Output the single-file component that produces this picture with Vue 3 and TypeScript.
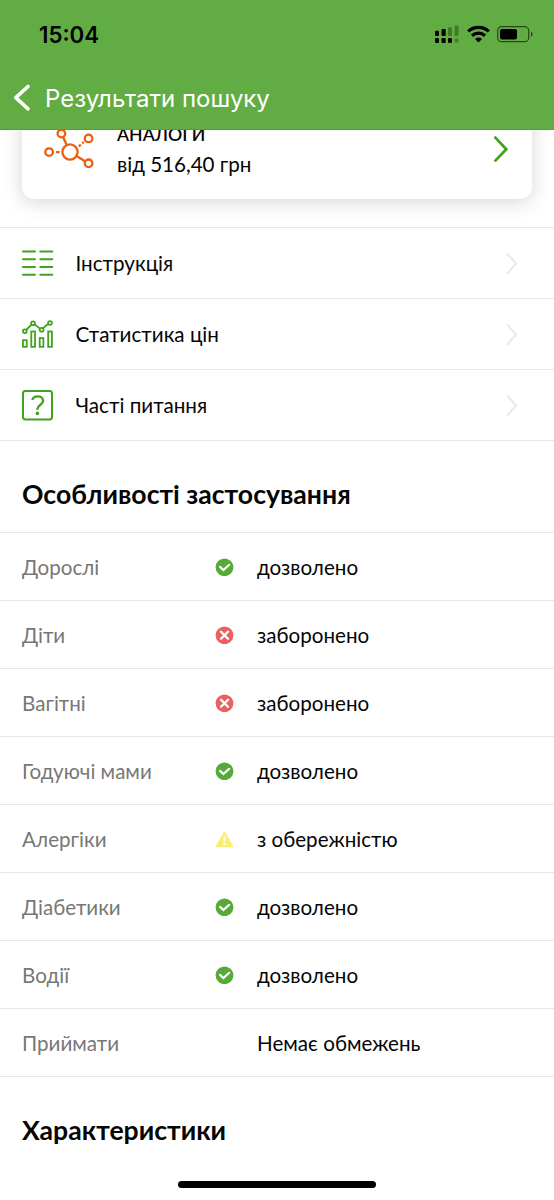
<script setup lang="ts">
type Status = 'ok' | 'no' | 'warn' | 'none'

interface MenuItem {
  icon: 'list' | 'chart' | 'question'
  label: string
}

interface UsageRow {
  label: string
  status: Status
  value: string
}

const menu: MenuItem[] = [
  { icon: 'list', label: 'Інструкція' },
  { icon: 'chart', label: 'Статистика цін' },
  { icon: 'question', label: 'Часті питання' },
]

const usage: UsageRow[] = [
  { label: 'Дорослі', status: 'ok', value: 'дозволено' },
  { label: 'Діти', status: 'no', value: 'заборонено' },
  { label: 'Вагітні', status: 'no', value: 'заборонено' },
  { label: 'Годуючі мами', status: 'ok', value: 'дозволено' },
  { label: 'Алергіки', status: 'warn', value: 'з обережністю' },
  { label: 'Діабетики', status: 'ok', value: 'дозволено' },
  { label: 'Водії', status: 'ok', value: 'дозволено' },
  { label: 'Приймати', status: 'none', value: 'Немає обмежень' },
]
</script>

<template>
  <div class="screen">
    <header class="header">
      <div class="status-bar">
        <span class="time">15:04</span>
        <svg class="indicators" width="100" height="20" viewBox="0 0 100 20">
          <g>
            <rect x="1" y="6.7" width="4" height="5.3" rx="1" />
            <rect x="7.5" y="5" width="4.2" height="7" rx="1" />
            <rect x="14" y="3.2" width="4" height="8.8" rx="1" opacity="0.3" />
            <rect x="20.6" y="1.5" width="4" height="10.5" rx="1" opacity="0.3" />
            <rect x="1" y="14" width="4" height="5" rx="1.3" />
            <rect x="7.5" y="14" width="4.2" height="5" rx="1.3" />
            <rect x="14" y="14" width="4" height="5" rx="1.3" />
            <rect x="20.8" y="14.5" width="3.6" height="4" rx="1" opacity="0.3" />
          </g>
          <g fill="none" stroke="#000" stroke-width="3.3">
            <path d="M34.2 7.4a15.2 15.2 0 0 1 20.6 0" />
            <path d="M38 11.7a9.6 9.6 0 0 1 13 0" />
          </g>
          <path d="M41 14.9a5.4 5.4 0 0 1 7 0l-3.5 3.5z" />
          <rect x="63.7" y="2.7" width="31" height="15" rx="4" fill="none" stroke="#000" stroke-opacity="0.6" stroke-width="1.2" />
          <rect x="66" y="5" width="17" height="10.5" rx="2" />
          <path d="M97 7.8c2 .8 2 4.2 0 5z" opacity="0.6" />
        </svg>
      </div>
      <div class="nav">
        <svg class="back" width="18" height="28" viewBox="0 0 18 28">
          <path d="M16 2.5L3.8 13.7 16 24.8" fill="none" stroke="#fff" stroke-width="3.6" stroke-linecap="round" stroke-linejoin="round" />
        </svg>
        <span class="nav-title">Результати пошуку</span>
      </div>
    </header>

    <main class="content">
      <section class="card">
        <svg class="molecule" width="52" height="44" viewBox="0 0 52 44">
          <g fill="none" stroke="#eb5f10" stroke-width="2.3">
            <circle cx="27" cy="23" r="7.6" />
            <circle cx="18.4" cy="4.6" r="3.8" />
            <circle cx="45.6" cy="9.4" r="3.8" />
            <circle cx="6.1" cy="23.1" r="3.8" />
            <circle cx="45.6" cy="34.3" r="3.8" />
            <path d="M20.2 8.3l3.5 7.7M34 27.2l8 5M13 23.1h3.6M35.8 17.4l2-1.7M39.2 14.4l1.6-1.2" />
          </g>
        </svg>
        <div class="card-text">
          <span class="card-title">АНАЛОГИ</span>
          <span class="card-price">від 516,40 грн</span>
        </div>
        <svg class="card-arrow" width="18" height="30" viewBox="0 0 18 30">
          <path d="M2.4 3.6l10.9 11.6L2.4 26.6" fill="none" stroke="#43a31d" stroke-width="2.8" stroke-linecap="round" />
        </svg>
      </section>

      <nav class="menu">
        <a v-for="item in menu" :key="item.label" class="menu-item">
          <svg class="menu-icon" width="32" height="32" viewBox="0 0 32 32" fill="none" stroke="#3fa41c">
            <path v-if="item.icon === 'list'" stroke-width="2" stroke-linecap="round" d="M1 4.6h12M18.3 4.6h12M1 12.3h12M18.3 12.3h12M1 20h12M18.3 20h12M1 27.7h12M18.3 27.7h12" />
            <g v-else-if="item.icon === 'chart'" stroke-width="1.8">
              <path d="M4.1 12l5.4-5.3M12.6 6.4l5.4 4.2M20.8 10.4l5.5-4.6" />
              <circle cx="2.8" cy="13.3" r="1.9" />
              <circle cx="11" cy="5.2" r="1.9" />
              <circle cx="19.6" cy="11.8" r="1.9" />
              <circle cx="28" cy="5" r="1.9" />
              <rect x="1" y="22.2" width="3.7" height="6.6" />
              <rect x="9.3" y="13.5" width="3.7" height="15.3" />
              <rect x="17.7" y="20.1" width="3.7" height="8.7" />
              <rect x="26.2" y="13.5" width="3.7" height="15.3" />
            </g>
            <g v-else>
              <rect x="1" y="1.9" width="29" height="28.6" rx="2.4" stroke-width="2" />
              <path d="M10.3 11c.6-2.4 2.5-3.6 5.3-3.6 3.2 0 5.5 1.7 5.5 4.4 0 4.1-5.7 4.2-5.7 8.2v.8" stroke-width="2.4" />
              <circle cx="15.4" cy="24.4" r="1.8" fill="#3fa41c" stroke="none" />
            </g>
          </svg>
          <span class="menu-label">{{ item.label }}</span>
          <svg class="menu-arrow" width="14" height="24" viewBox="0 0 14 24">
            <path d="M3 2.4l9 10.2L3 22.8" fill="none" stroke="#e9e9e9" stroke-width="2" />
          </svg>
        </a>
      </nav>

      <h2 class="section-title">Особливості застосування</h2>

      <div class="usage">
        <div v-for="row in usage" :key="row.label" class="usage-row">
          <span class="usage-label">{{ row.label }}</span>
          <span class="usage-icon">
            <svg v-if="row.status !== 'none'" width="19" height="18" viewBox="0 0 19 18">
              <g v-if="row.status === 'ok'">
                <circle cx="9.5" cy="9.3" r="8.9" fill="#55ab36" />
                <path d="M5.1 8.9l3.3 3.1 5.8-5.2" fill="none" stroke="#fff" stroke-width="2.2" stroke-linecap="round" />
              </g>
              <g v-else-if="row.status === 'no'">
                <circle cx="9.5" cy="9.3" r="8.9" fill="#ee6060" />
                <path d="M6 5.8l7 7M13 5.8l-7 7" stroke="#fff" stroke-width="2.3" stroke-linecap="round" />
              </g>
              <g v-else>
                <path d="M9.5 2l8.2 14.6H1.3z" fill="#fbee78" stroke="#fbee78" stroke-width="1.4" stroke-linejoin="round" />
                <path d="M9.5 6.4v5M9.5 13.1v2" stroke="#fff" stroke-width="1.9" />
              </g>
            </svg>
          </span>
          <span class="usage-value">{{ row.value }}</span>
        </div>
      </div>

      <h2 class="section-title">Характеристики</h2>
    </main>

    <div class="home-indicator"></div>
  </div>
</template>

<style>
body {
  margin: 0;
  background: #fff;
}
</style>

<style scoped>
.screen {
  position: relative;
  width: 554px;
  height: 1200px;
  overflow: hidden;
  display: flex;
  flex-direction: column;
  background: #fff;
  color: #050505;
  font-family: Lato, 'Noto Sans', sans-serif;
}

.header {
  box-sizing: border-box;
  flex: none;
  height: 130px;
  background: #62ad43;
  border-bottom: 1px solid #559b38;
  font-family: Inter, sans-serif;
}

.status-bar {
  display: flex;
  justify-content: space-between;
  align-items: center;
  height: 68px;
  padding: 0 20px 0 39px;
}

.time {
  font-size: 22.3px;
  font-weight: 600;
  color: #000;
}

.nav {
  display: flex;
  align-items: center;
  height: 60px;
  padding-left: 12px;
}

.nav-title {
  margin-left: 15px;
  font-size: 24px;
  color: #fff;
  white-space: nowrap;
}

.content {
  flex: 1;
  min-height: 0;
  overflow: hidden;
}

.card {
  box-sizing: border-box;
  display: flex;
  align-items: flex-start;
  height: 111px;
  margin: -42px 22px 28px;
  padding: 41px 21px 0;
  border-radius: 12px;
  background: #fff;
  box-shadow: 0 3px 20px rgba(0, 0, 0, 0.17);
}

.molecule {
  flex: none;
}

.card-text {
  display: flex;
  flex-direction: column;
  flex: 1;
  margin-left: 22px;
}

.card-title {
  margin-top: -7px;
  font-size: 17.7px;
  font-weight: 600;
  line-height: 26px;
}

.card-price {
  margin-top: 2px;
  font-size: 20.6px;
  line-height: 28px;
}

.card-arrow {
  margin-top: 5px;
}

.menu {
  border-top: 1px solid #e8e8e8;
}

.menu-item {
  box-sizing: border-box;
  display: flex;
  align-items: center;
  height: 71px;
  padding: 0 36px 0 22px;
  border-bottom: 1px solid #e8e8e8;
}

.menu-label {
  flex: 1;
  margin-left: 21.5px;
  font-size: 20.65px;
}

.section-title {
  box-sizing: border-box;
  height: 91px;
  margin: 0;
  padding: 35px 22px 0;
  font-size: 26.6px;
  line-height: 36px;
  font-weight: 700;
  white-space: nowrap;
}

.usage {
  border-top: 1px solid #e8e8e8;
}

.usage-row {
  box-sizing: border-box;
  display: grid;
  grid-template-columns: 193px 42px 1fr;
  align-items: center;
  height: 68px;
  padding: 0 22px;
  border-bottom: 1px solid #e8e8e8;
  font-size: 20.6px;
}

.usage-label {
  color: #777;
}

.usage-icon {
  display: flex;
}

.home-indicator {
  position: absolute;
  left: 178px;
  bottom: 12px;
  width: 198px;
  height: 7px;
  border-radius: 4px;
  background: #000;
}
</style>
